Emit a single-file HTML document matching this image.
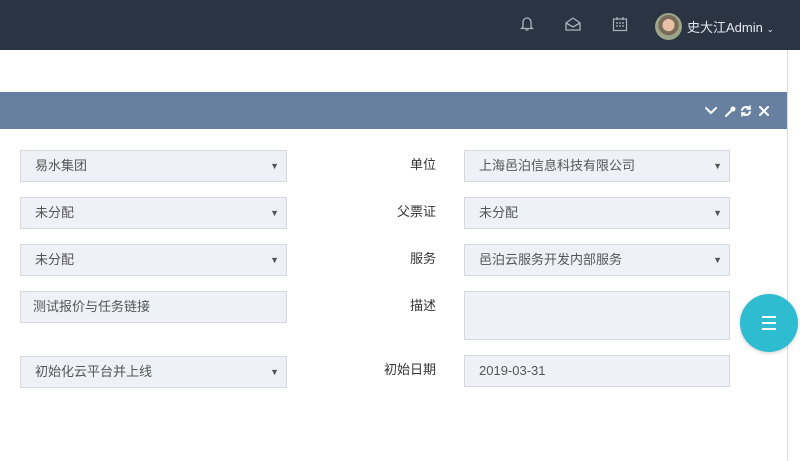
<!DOCTYPE html><html><head><meta charset="utf-8"><style>
*{box-sizing:border-box;margin:0;padding:0}
body{width:800px;height:461px;overflow:hidden;background:#fff;position:relative;font-family:"Liberation Sans","Noto Sans CJK SC",sans-serif;font-size:13px;color:#555}
.top{position:absolute;left:0;top:0;width:800px;height:50px;background:#2b3442}
.ph{position:absolute;left:0;top:92px;width:787px;height:37px;background:#67809f}
.vl{position:absolute;left:787px;top:50px;width:1px;height:411px;background:#ddd}
.in{position:absolute;height:32px;background:#eef1f5;border:1px solid #d5d9de;padding-left:14px;line-height:30px;color:#555}
.in .a{position:absolute;right:7px;top:0;font-size:9px;color:#555}
.lb{position:absolute;width:80px;text-align:right;line-height:30px;color:#333}
.fab{position:absolute;left:740px;top:294px;width:58px;height:58px;border-radius:50%;background:#2ebcd0;box-shadow:0 1px 4px rgba(0,0,0,.2)}
.fab i{position:absolute;left:22px;width:14px;height:2px;background:#fff}
</style></head><body>
<div class="top">
<svg style="position:absolute;left:520px;top:16px" width="14" height="16" viewBox="0 0 14 16" fill="none" stroke="#aab2bd" stroke-width="1.3"><path d="M3 11V6a4 4 0 0 1 8 0v5l1.5 1.5h-11z M5.5 14h3"/></svg>
<svg style="position:absolute;left:565px;top:17px" width="16" height="14" viewBox="0 0 16 14" fill="none" stroke="#aab2bd" stroke-width="1.3"><path d="M1 6l7-5 7 5v7H1z M1 6l7 4 7-4"/></svg>
<svg style="position:absolute;left:612px;top:16px" width="16" height="16" viewBox="0 0 16 16" fill="none" stroke="#aab2bd" stroke-width="1.2"><rect x="1.5" y="3" width="13" height="11.5"/><path d="M5 1v3M11 1v3M4 7h2M7 7h2M10 7h2M4 10h2M7 10h2M10 10h2"/></svg>
<div style="position:absolute;left:655px;top:13px;width:27px;height:27px;border-radius:50%;background:radial-gradient(circle at 50% 45%,#e8c0a8 0 30%,#7a6a58 31% 50%,#9aa58a 51%)"></div>
<div style="position:absolute;left:687px;top:17px;color:#e6e9ee;font-size:13px">史大江Admin <span style="font-size:9px">⌄</span></div>
</div>
<div class="ph">
<svg style="position:absolute;left:704px;top:12px" width="74" height="14" viewBox="0 0 74 14" fill="none" stroke="#fff" stroke-width="2" stroke-linecap="round">
<path d="M2 4l5 5 5-5"/>
<path d="M22 12l5-5" /><circle cx="29" cy="5" r="2.5" fill="#fff" stroke="none"/>
<path d="M46 5a4.5 4.5 0 0 0-8 1M38 9a4.5 4.5 0 0 0 8-1" /><path d="M46 2v3h-3M38 12V9h3" stroke-width="1.5"/>
<path d="M56 3l8 8M64 3l-8 8"/>
</svg>
</div>
<div class="vl"></div>

<div class="in" style="left:20px;top:150px;width:267px">易水集团<span class="a">▼</span></div>
<div class="in" style="left:20px;top:197px;width:267px">未分配<span class="a">▼</span></div>
<div class="in" style="left:20px;top:244px;width:267px">未分配<span class="a">▼</span></div>
<div class="in" style="left:20px;top:291px;width:267px;padding-left:12px">测试报价与任务链接</div>
<div class="in" style="left:20px;top:356px;width:267px">初始化云平台并上线<span class="a">▼</span></div>

<div class="lb" style="left:356px;top:150px">单位</div>
<div class="lb" style="left:356px;top:197px">父票证</div>
<div class="lb" style="left:356px;top:244px">服务</div>
<div class="lb" style="left:356px;top:291px">描述</div>
<div class="lb" style="left:356px;top:355px">初始日期</div>

<div class="in" style="left:464px;top:150px;width:266px">上海邑泊信息科技有限公司<span class="a">▼</span></div>
<div class="in" style="left:464px;top:197px;width:266px">未分配<span class="a">▼</span></div>
<div class="in" style="left:464px;top:244px;width:266px">邑泊云服务开发内部服务<span class="a">▼</span></div>
<div class="in" style="left:464px;top:291px;width:266px;height:49px"></div>
<div class="in" style="left:464px;top:355px;width:266px">2019-03-31</div>

<div class="fab"><i style="top:22px"></i><i style="top:28px"></i><i style="top:34px"></i></div>
</body></html>
